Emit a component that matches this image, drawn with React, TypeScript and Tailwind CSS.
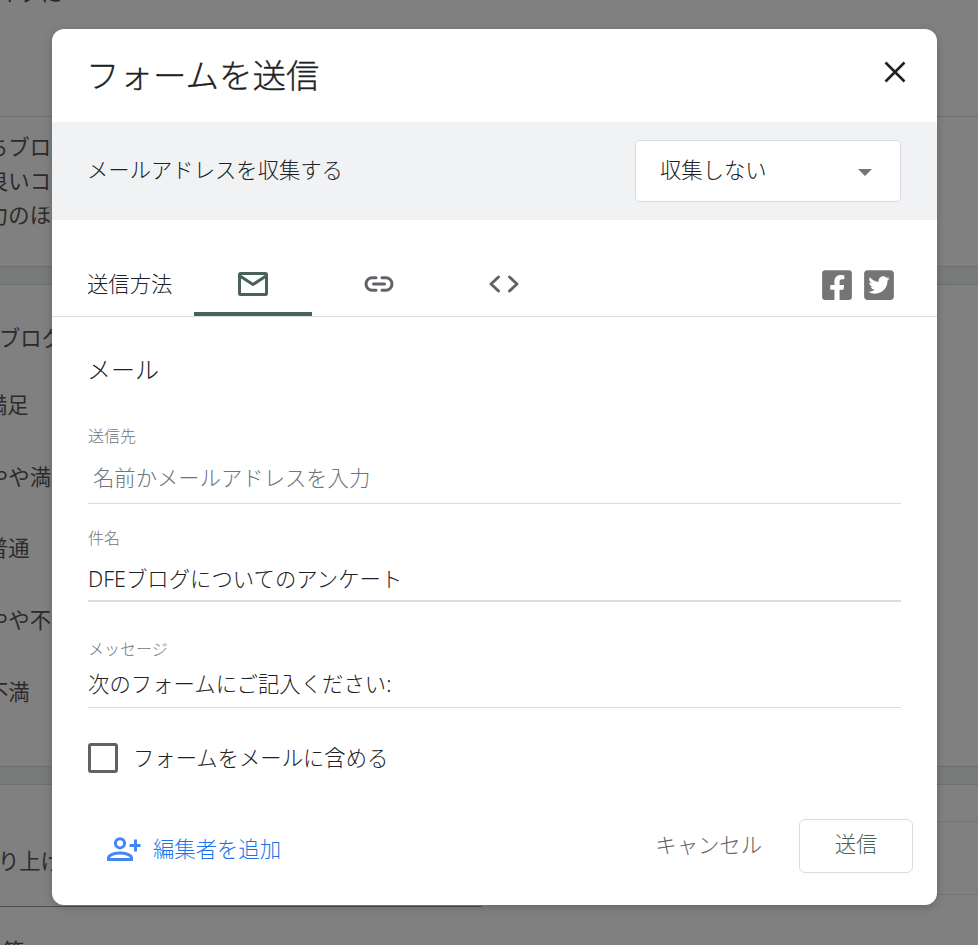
import { FaFacebookSquare, FaTwitterSquare } from "react-icons/fa";

const font = { fontFamily: '"Noto Sans","Noto Sans CJK JP",sans-serif' };

const Field = ({
  label,
  value,
  className,
}: {
  label: string;
  value: string;
  className: string;
}) => (
  <div className={className}>
    <div className="text-[16px] leading-[24px] text-[#70757a]">{label}</div>
    <div className="text-[21.33px] leading-[32px] text-[#202124] tracking-[0.05px]">{value}</div>
  </div>
);

const Backdrop = () => (
  <div className="h-[945px] flex flex-col overflow-hidden text-[21.33px] leading-[34px] text-[#2b2b2b] bg-[#808080]">
    <div className="h-[117px] shrink-0 flex flex-col border-b border-[#6f6f6f]">
      <div className="-mt-[24px] -ml-[2px]">イプに</div>
    </div>
    <div className="h-[149px] shrink-0 pt-[13px] -ml-[13px]">
      <div>ちブログ</div>
      <div>良いコメ</div>
      <div>力のほど</div>
    </div>
    <div className="h-[19px] shrink-0 bg-[#767a78] border-y border-[#6f6f6f]" />
    <div className="h-[481px] shrink-0">
      <div className="pt-[36px] -ml-[1px]">ブログ</div>
      <div className="pt-[33px] -ml-[14px]">満足</div>
      <div className="pt-[38px] -ml-[13px]">やや満足</div>
      <div className="pt-[37px] -ml-[13px]">普通</div>
      <div className="pt-[38px] -ml-[13px]">やや不満</div>
      <div className="pt-[38px] -ml-[13px]">不満</div>
    </div>
    <div className="h-[19px] shrink-0 bg-[#767a78] border-y border-[#6f6f6f]" />
    <div className="h-[37px] shrink-0 ml-[500px] border-b border-[#757575]" />
    <div className="h-[73px] shrink-0 relative">
      <div className="pt-[22px] -ml-[2px]">り上げ</div>
      <div className="absolute left-[500px] right-0 bottom-0 border-b border-[#757575]" />
    </div>
    <div className="w-[482px] h-[12px] shrink-0 border-b border-[#4d4d4d]" />
    <div className="pt-[27px] ml-[3px]">等</div>
  </div>
);

export default function App() {
  return (
    <div className="relative w-[978px] h-[945px] overflow-hidden" style={font}>
      <Backdrop />
      <div className="absolute left-[52px] top-[29px] w-[885px] h-[876px] flex flex-col bg-white rounded-[12px] shadow-[0_2px_10px_rgba(0,0,0,0.2)]">
        <div className="h-[93px] shrink-0 flex items-center justify-between pl-[34px] pr-[27px]">
          <h1 className="text-[33.5px] font-light leading-[44px] text-[#202124] [-webkit-text-stroke:0.3px] -mt-[1px]">フォームを送信</h1>
          <svg viewBox="0 0 24 24" className="w-[30px] h-[30px] -mt-[7px] text-[#202124]" fill="none" stroke="currentColor" strokeWidth="2.1">
            <path d="M4.4 4.4l15.2 15.2M19.6 4.4L4.4 19.6" />
          </svg>
        </div>

        <div className="h-[98px] shrink-0 bg-[#f1f2f4] flex items-center justify-between pl-[35px] pr-[36px]">
          <span className="text-[21.33px] font-light text-[#202124] -mt-[2px]">メールアドレスを収集する</span>
          <div className="w-[266px] h-[62px] bg-white border border-[#dadce0] rounded-[4px] flex items-center justify-between pl-[24px] pr-[28px]">
            <span className="text-[21.33px] font-light text-[#202124] -mt-[2px]">収集しない</span>
            <div className="w-0 h-0 border-x-[7px] border-x-transparent border-t-[7px] border-t-[#70757a] mt-[2px]" />
          </div>
        </div>

        <div className="h-[97px] shrink-0 flex items-end border-b border-[#dadce0] pl-[35px] pr-[43px]">
          <span className="w-[107px] h-[64px] text-[21.33px] font-light leading-[32px] pt-[16px] text-[#202124]">送信方法</span>
          <div className="w-[118px] h-[64px] flex justify-center border-b-4 border-[#4a6358] rounded-t-[3px]">
            <svg viewBox="0 0 30 24" className="w-[30px] h-[24px] mt-[20px]" fill="none" stroke="#4a6358" strokeWidth="3" strokeLinejoin="round">
              <rect x="1.500" y="1.500" width="27" height="21" rx="1" />
              <path d="M2 4l13 8.500L28 4" />
            </svg>
          </div>
          <div className="w-[134px] h-[64px] flex justify-center">
            <svg viewBox="0 0 30 16" className="w-[30px] h-[16px] mt-[24px]" fill="none" stroke="#5f6368" strokeWidth="3" strokeLinecap="round">
              <path d="M12 1.7H8.3a6.3 6.3 0 0 0 0 12.6H12M18 1.7h3.7a6.3 6.3 0 0 1 0 12.6H18M9.500 8h11" />
            </svg>
          </div>
          <div className="w-[116px] h-[64px] flex justify-center">
            <svg viewBox="0 0 30 18" className="w-[30px] h-[18px] mt-[23px]" fill="none" stroke="#5f6368" strokeWidth="3" strokeLinecap="round" strokeLinejoin="round">
              <path d="M9.500 2L2 9l7.500 7M20.500 2L28 9l-7.500 7" />
            </svg>
          </div>
          <div className="ml-auto h-[64px] flex gap-[12px] pt-[18px]">
            <FaFacebookSquare className="w-[34px] h-[34px] -mx-[2px] -mt-[2px] text-[#757575]" />
            <FaTwitterSquare className="w-[34px] h-[34px] -mx-[2px] -mt-[2px] text-[#757575]" />
          </div>
        </div>

        <div className="flex-1 flex flex-col pl-[36px] pr-[36px] font-light">
          <h2 className="text-[24px] leading-[36px] text-[#202124] mt-[35px] -ml-[1px]">メール</h2>
          <div className="mt-[36px] h-[80px] border-b border-[#dadce0]">
            <div className="text-[16px] leading-[24px] text-[#70757a]">送信先</div>
            <div className="pl-[5px] text-[21.33px] leading-[32px] mt-[14px] text-[#70757a]">名前かメールアドレスを入力</div>
          </div>
          <Field label="件名" value="DFEブログについてのアンケート" className="mt-[22px] h-[76px] border-b-2 border-[#dadce0] [&>div:last-child]:mt-[13px]" />
          <Field label="メッセージ" value="次のフォームにご記入ください:" className="mt-[35px] h-[71px] border-b border-[#dadce0] [&>div:last-child]:mt-[7px]" />
          <div className="mt-[35px] flex items-center gap-[16px]">
            <div className="w-[30px] h-[30px] border-[3px] border-[#5f6368] rounded-[3px]" />
            <span className="text-[21.33px] leading-[30px] text-[#202124] -ml-[1px]">フォームをメールに含める</span>
          </div>
          <div className="mt-[46px] flex items-start -mr-[12px]">
            <div className="flex items-center gap-[13px] ml-[19px] mt-[14px] text-[#1a73e8]">
              <svg viewBox="0 0 34 24" className="w-[34px] h-[24px]" fill="none" stroke="#4285f4" strokeWidth="3">
                <circle cx="13" cy="6.300" r="4.600" />
                <path d="M1.500 22.500v-1.500c0-3 6-5 11.500-5s11.500 2 11.500 5v1.500zM28.500 2.500v12M22.500 8.500h11" />
              </svg>
              <span className="text-[21.33px] leading-[32px] -ml-[1px]">編集者を追加</span>
            </div>
            <span className="ml-auto mt-[10px] text-[21.33px] leading-[32px] text-[#5f6368] -translate-x-[1px]">キャンセル</span>
            <div className="ml-[36px] w-[114px] h-[54px] border border-[#dadce0] rounded-[6px] flex items-center justify-center text-[21.33px] text-[#4a6358] pb-[5px]">送信</div>
          </div>
        </div>
      </div>
    </div>
  );
}
